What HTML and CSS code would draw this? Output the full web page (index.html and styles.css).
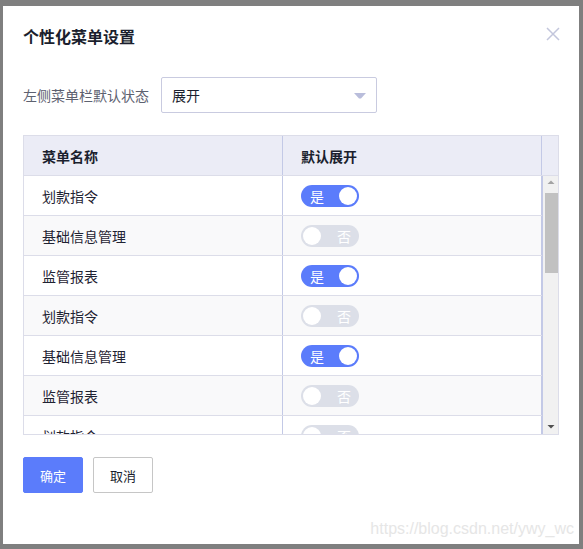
FILE: index.html
```html
<!DOCTYPE html>
<html lang="zh">
<head>
<meta charset="utf-8">
<title>个性化菜单设置</title>
<link rel="stylesheet" href="styles.css">
</head>
<body>
<div class="dialog">
  <div class="dlg-head">
    <h1 class="dlg-title">个性化菜单设置</h1>
    <svg class="dlg-close" width="14" height="14" viewBox="0 0 14 14"><path d="M1 1 L13 13 M13 1 L1 13" stroke="#c3c6dc" stroke-width="1.5" fill="none"/></svg>
  </div>
  <div class="form-row">
    <span class="form-label">左侧菜单栏默认状态</span>
    <div class="select">
      <span>展开</span>
      <svg class="caret" width="12" height="6" viewBox="0 0 12 6"><path d="M0 0 H12 L7 5.5 H5 Z" fill="#b9bddb"/></svg>
    </div>
  </div>
  <div class="table">
    <div class="thead">
      <div class="th c1">菜单名称</div>
      <div class="th c2">默认展开</div>
      <div class="th gutter"></div>
    </div>
    <div class="tbody">
      <div class="rows">
        <div class="tr"><div class="td c1">划款指令</div><div class="td c2"><span class="sw on"><b>是</b><i></i></span></div></div>
        <div class="tr alt"><div class="td c1">基础信息管理</div><div class="td c2"><span class="sw off"><i></i><b>否</b></span></div></div>
        <div class="tr"><div class="td c1">监管报表</div><div class="td c2"><span class="sw on"><b>是</b><i></i></span></div></div>
        <div class="tr alt"><div class="td c1">划款指令</div><div class="td c2"><span class="sw off"><i></i><b>否</b></span></div></div>
        <div class="tr"><div class="td c1">基础信息管理</div><div class="td c2"><span class="sw on"><b>是</b><i></i></span></div></div>
        <div class="tr alt"><div class="td c1">监管报表</div><div class="td c2"><span class="sw off"><i></i><b>否</b></span></div></div>
        <div class="tr"><div class="td c1">划款指令</div><div class="td c2"><span class="sw off"><i></i><b>否</b></span></div></div>
      </div>
      <div class="scrollbar">
        <svg class="arrow" width="16" height="14" viewBox="0 0 16 14"><path d="M4.5 8 H11.5 L8 4.5 Z" fill="#a3a3a3"/></svg>
        <div class="thumb"></div>
        <div class="track-rest"></div>
        <svg class="arrow" width="16" height="14" viewBox="0 0 16 14"><path d="M4.5 5 H11.5 L8 8.5 Z" fill="#505050"/></svg>
      </div>
    </div>
  </div>
  <div class="actions">
    <button class="btn primary">确定</button>
    <button class="btn">取消</button>
  </div>
  <div class="watermark">https://blog.csdn.net/ywy_wc</div>
</div>
</body>
</html>
```
FILE: styles.css
```css
* { box-sizing: border-box; }
html, body { margin: 0; }
body {
  background: #7f7f7f;
  padding: 6px 4px 5px 3px;
  width: 583px;
  height: 549px;
  font-family: "Microsoft YaHei", "Noto Sans CJK SC", "Noto Sans", sans-serif;
  color: #1f2333;
}
.dialog {
  position: relative;
  width: 576px;
  height: 538px;
  background: #fff;
  padding: 18px 20px 0 20px;
  display: flex;
  flex-direction: column;
}
.dlg-head {
  display: flex;
  justify-content: space-between;
  align-items: flex-start;
  height: 24px;
}
.dlg-title {
  margin: 0;
  font-size: 16px;
  font-weight: bold;
  line-height: 24px;
  color: #1b1f2e;
}
.dlg-close { margin: 3px -1px 0 0; }
.form-row {
  margin-top: 29px;
  display: flex;
  align-items: center;
  gap: 12px;
}
.form-label {
  font-size: 14px;
  color: #5d6170;
}
.select {
  width: 216px;
  height: 36px;
  border: 1px solid #c9cbe0;
  border-radius: 2px;
  display: flex;
  align-items: center;
  justify-content: space-between;
  padding: 0 10px 0 10px;
  font-size: 14px;
  color: #1b1f2e;
}
.caret { margin-top: 1px; }
.table {
  margin-top: 22px;
  width: 536px;
  border: 1px solid #dcdde9;
  font-size: 14px;
}
.thead {
  display: flex;
  height: 40px;
  background: #ebecf6;
  border-bottom: 1px solid #dcdde9;
}
.th {
  display: flex;
  align-items: center;
  padding-left: 18px;
  font-weight: bold;
  color: #1b1f2e;
}
.c1 { width: 259px; border-right: 1px solid #c3c9e6; }
.c2 { width: 259px; border-right: 1px solid #c3c9e6; }
.th.gutter { flex: 1; padding: 0; border: 0; }
.tbody {
  display: flex;
  height: 258px;
  overflow: hidden;
}
.rows { width: 518px; }
.tr {
  display: flex;
  height: 40px;
  border-bottom: 1px solid #dcdde9;
  background: #fff;
}
.tr.alt { background: #f9f9fa; }
.td {
  display: flex;
  align-items: center;
  padding-left: 18px;
  color: #1f2333;
}
.sw {
  position: relative;
  display: flex;
  align-items: center;
  justify-content: space-between;
  width: 58px;
  height: 22px;
  border-radius: 11px;
  padding: 0 2px;
}
.sw b {
  font-weight: normal;
  color: #fff;
  font-size: 14px;
  padding: 0 9px;
}
.sw i {
  display: block;
  width: 18px;
  height: 18px;
  border-radius: 50%;
  background: #fff;
}
.sw.on { background: #5b7cfb; }
.sw.on b { padding-left: 7px; }
.sw.off { background: #dcdfe8; }
.sw.off b { padding-right: 6px; }
.scrollbar {
  flex: 1;
  background: #f1f1f1;
  display: flex;
  flex-direction: column;
  align-items: center;
  border-left: 1px solid #c3c9e6;
}
.arrow { display: block; flex: none; }
.thumb {
  width: 13px;
  height: 80px;
  margin-top: 3px;
  background: #c1c1c1;
}
.track-rest { flex: 1; }
.actions {
  margin-top: 22px;
  display: flex;
  gap: 10px;
}
.btn {
  width: 60px;
  height: 36px;
  border: 1px solid #c6c6c6;
  border-radius: 2px;
  background: #fff;
  font-family: inherit;
  font-size: 13px;
  color: #1b1f2e;
  padding: 0;
}
.btn.primary {
  background: #5b7cfb;
  border-color: #5b7cfb;
  color: #fff;
}
.watermark {
  position: absolute;
  right: 5px;
  bottom: 6px;
  font-family: "Liberation Sans", Arial, sans-serif;
  font-size: 16px;
  color: #e6e6e6;
}
```
